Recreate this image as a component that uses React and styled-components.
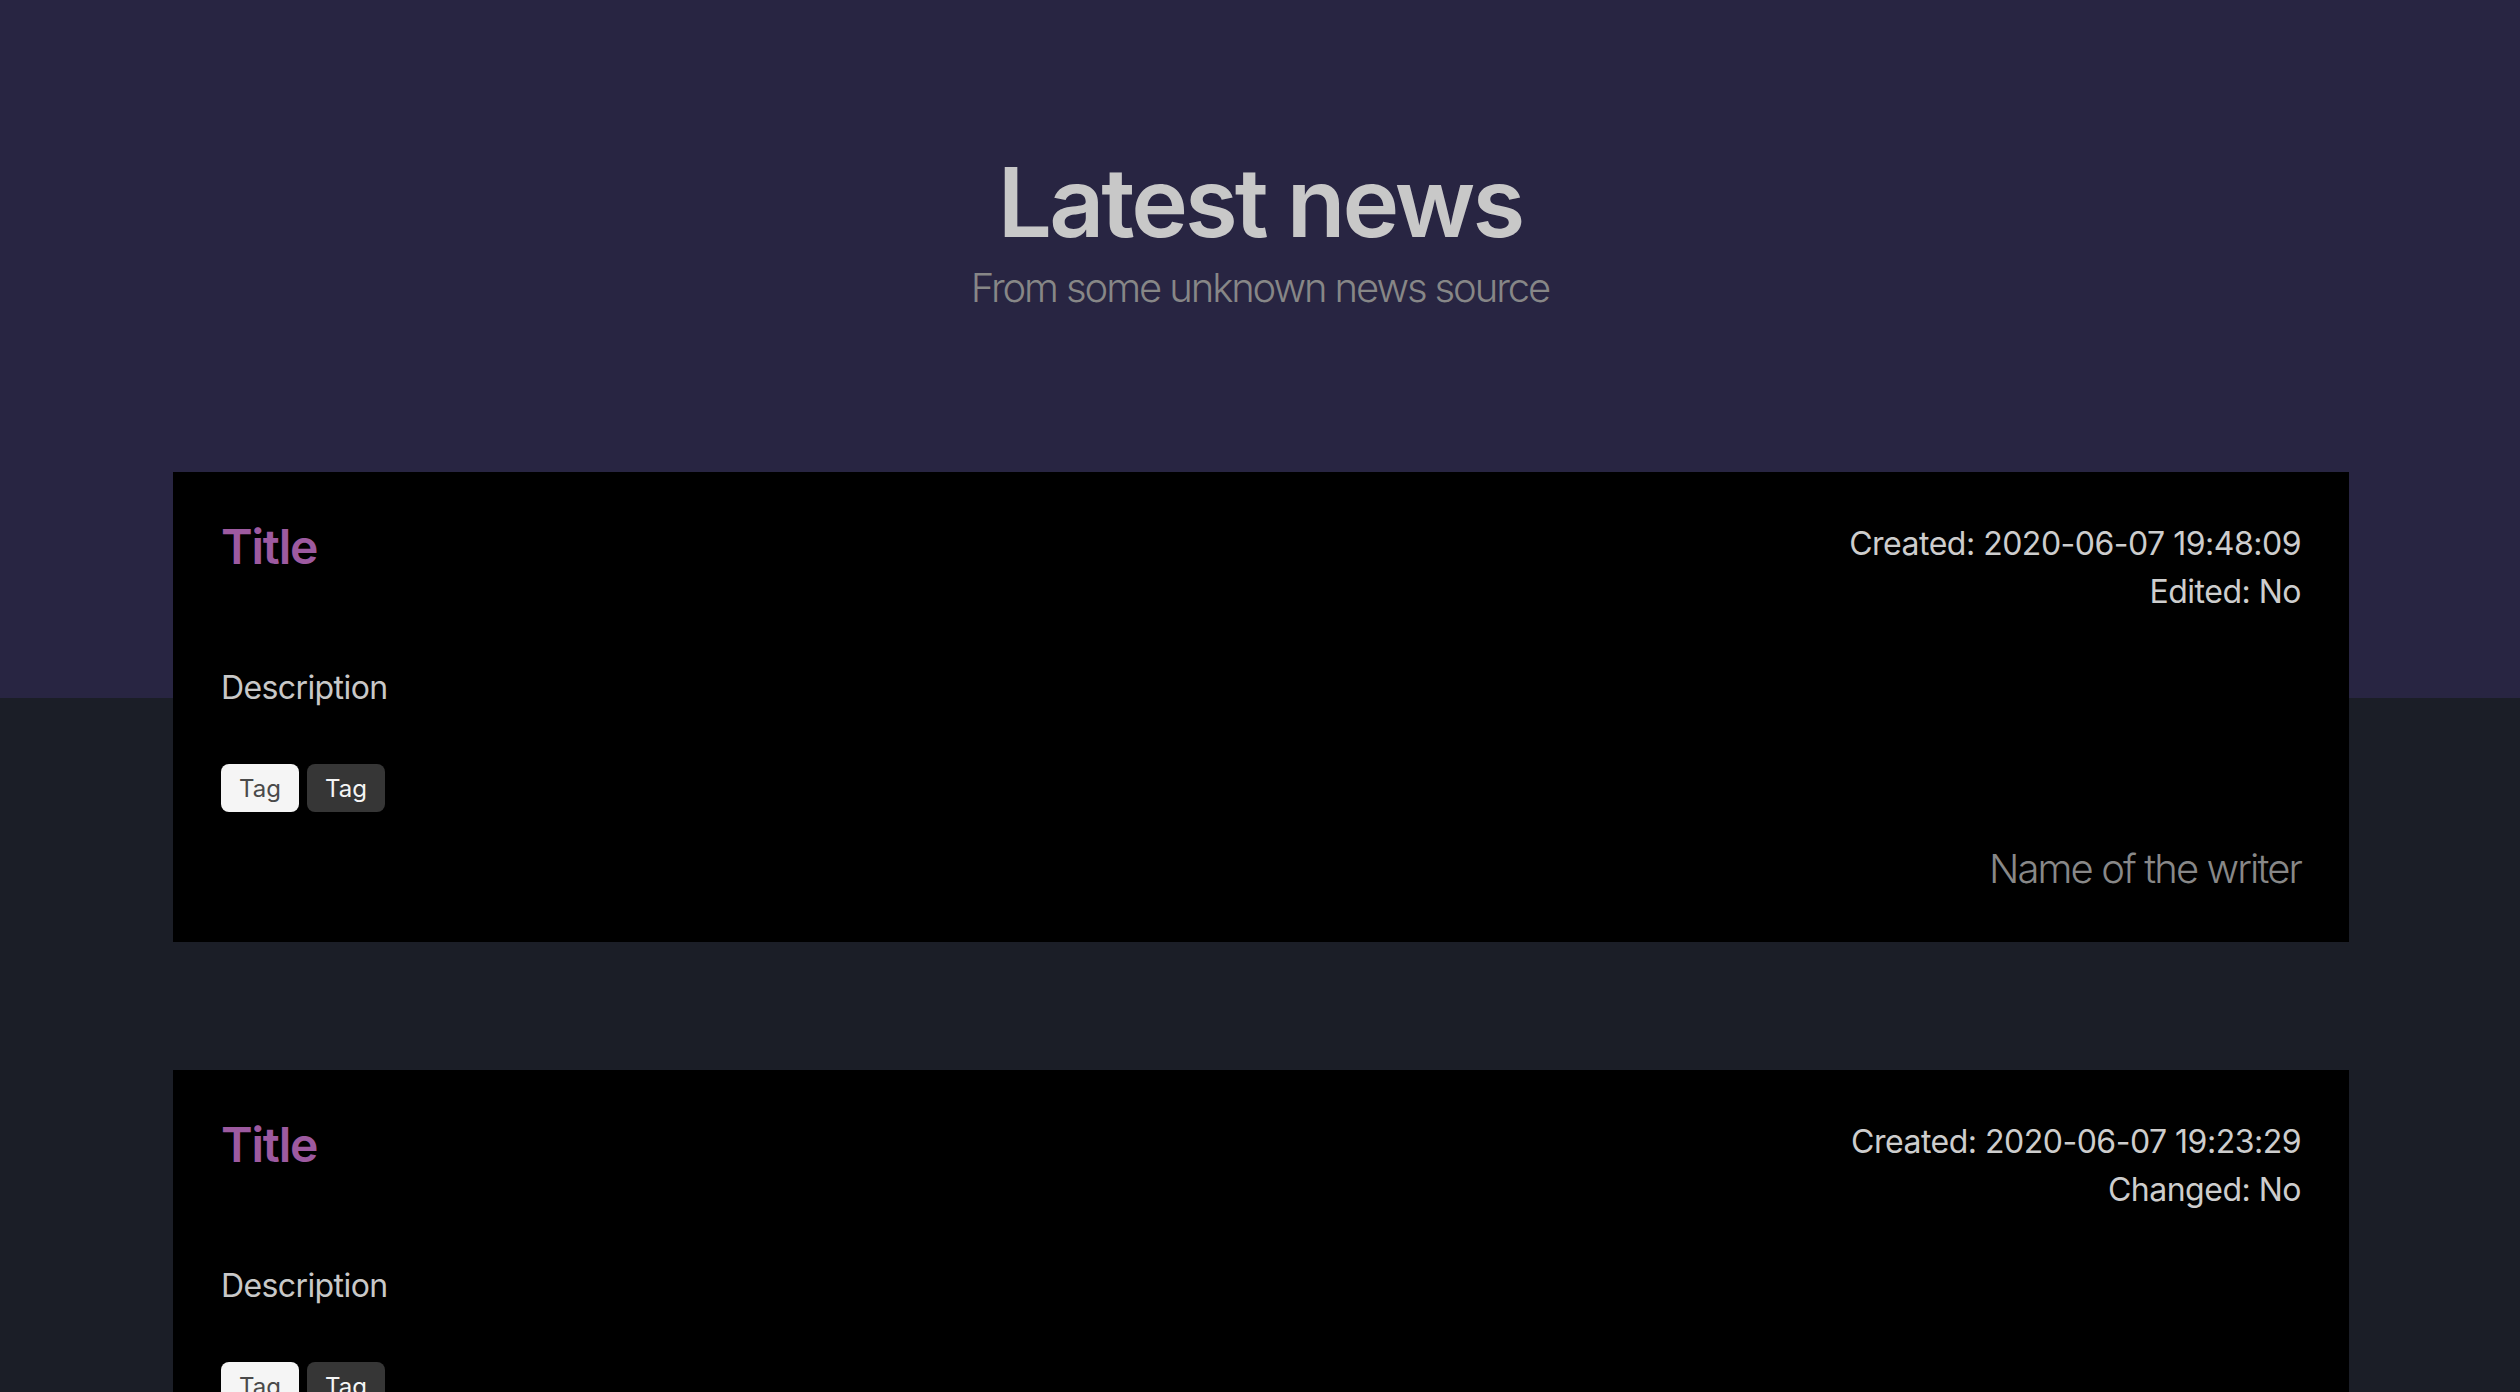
import React from "react";
import styled, { createGlobalStyle } from "styled-components";

const GlobalStyle = createGlobalStyle`
	html,
	body {
		margin: 0;
		padding: 0;
		background: #1b1e27;
	}
	body {
		font-family: Inter, "Noto Sans", "Liberation Sans", sans-serif;
		-webkit-font-smoothing: antialiased;
	}
	* {
		box-sizing: border-box;
	}
`;

const Page = styled.div`
	min-height: 100vh;
	background: linear-gradient(to bottom, #282542 0, #282542 698px, #1b1e27 698px);
	padding-bottom: 128px;
`;

const Hero = styled.header`
	height: 698px;
	padding-top: 148px;
	text-align: center;
`;

const HeroTitle = styled.h1`
	margin: 0;
	font-size: 96px;
	line-height: 1.125;
	font-weight: 600;
	color: #c8c8c8;
	letter-spacing: -3px;
`;

const HeroSubtitle = styled.h2`
	margin: 7px 0 0;
	font-size: 40px;
	line-height: 1.25;
	font-weight: 300;
	color: #878787;
	letter-spacing: -2.1px;
`;

const NewsList = styled.main`
	margin-top: -226px;
	padding: 0 171px 0 173px;
	display: flex;
	flex-direction: column;
	gap: 128px;
`;

const Card = styled.article`
	background: #000;
	padding: 48px;
	color: #cdcdcd;
`;

const CardHead = styled.div`
	display: flex;
	justify-content: space-between;
	align-items: flex-start;
	margin-bottom: 48px;
`;

const CardTitle = styled.h3`
	margin: 0;
	font-size: 48px;
	line-height: 1.125;
	font-weight: 600;
	color: #9d5aa0;
	letter-spacing: -1.2px;
`;

const Meta = styled.div`
	text-align: right;
	font-size: 32px;
	line-height: 48px;
	color: #cdcdcd;
	letter-spacing: -0.5px;
`;

const Description = styled.p`
	margin: 0 0 52px;
	font-size: 32px;
	line-height: 48px;
	color: #c8c8c8;
	letter-spacing: -0.6px;
`;

const Tags = styled.div`
	display: flex;
	gap: 8px;
	margin-bottom: 32px;
`;

const Tag = styled.span`
	display: inline-flex;
	align-items: center;
	height: 48px;
	padding: 0 18px;
	border-radius: 8px;
	font-size: 24px;
	background: ${(p) => (p.dark ? "#363636" : "#f5f5f5")};
	color: ${(p) => (p.dark ? "#f5f5f5" : "#4a4a4a")};
`;

const Writer = styled.div`
	text-align: right;
	font-size: 40px;
	line-height: 50px;
	font-weight: 300;
	color: #888;
	letter-spacing: -1.9px;
`;

const news = [
	{ created: "2020-06-07 19:48:09", flagLabel: "Edited", flag: "No" },
	{ created: "2020-06-07 19:23:29", flagLabel: "Changed", flag: "No" },
];

function NewsCard({ item }) {
	return (
		<Card>
			<CardHead>
				<CardTitle>Title</CardTitle>
				<Meta>
					<div>Created: {item.created}</div>
					<div>
						{item.flagLabel}: {item.flag}
					</div>
				</Meta>
			</CardHead>
			<Description>Description</Description>
			<Tags>
				<Tag>Tag</Tag>
				<Tag dark>Tag</Tag>
			</Tags>
			<Writer>Name of the writer</Writer>
		</Card>
	);
}

export default function App() {
	return (
		<>
			<GlobalStyle />
			<Page>
				<Hero>
					<HeroTitle>Latest news</HeroTitle>
					<HeroSubtitle>From some unknown news source</HeroSubtitle>
				</Hero>
				<NewsList>
					{news.map((item, i) => (
						<NewsCard key={i} item={item} />
					))}
				</NewsList>
			</Page>
		</>
	);
}
